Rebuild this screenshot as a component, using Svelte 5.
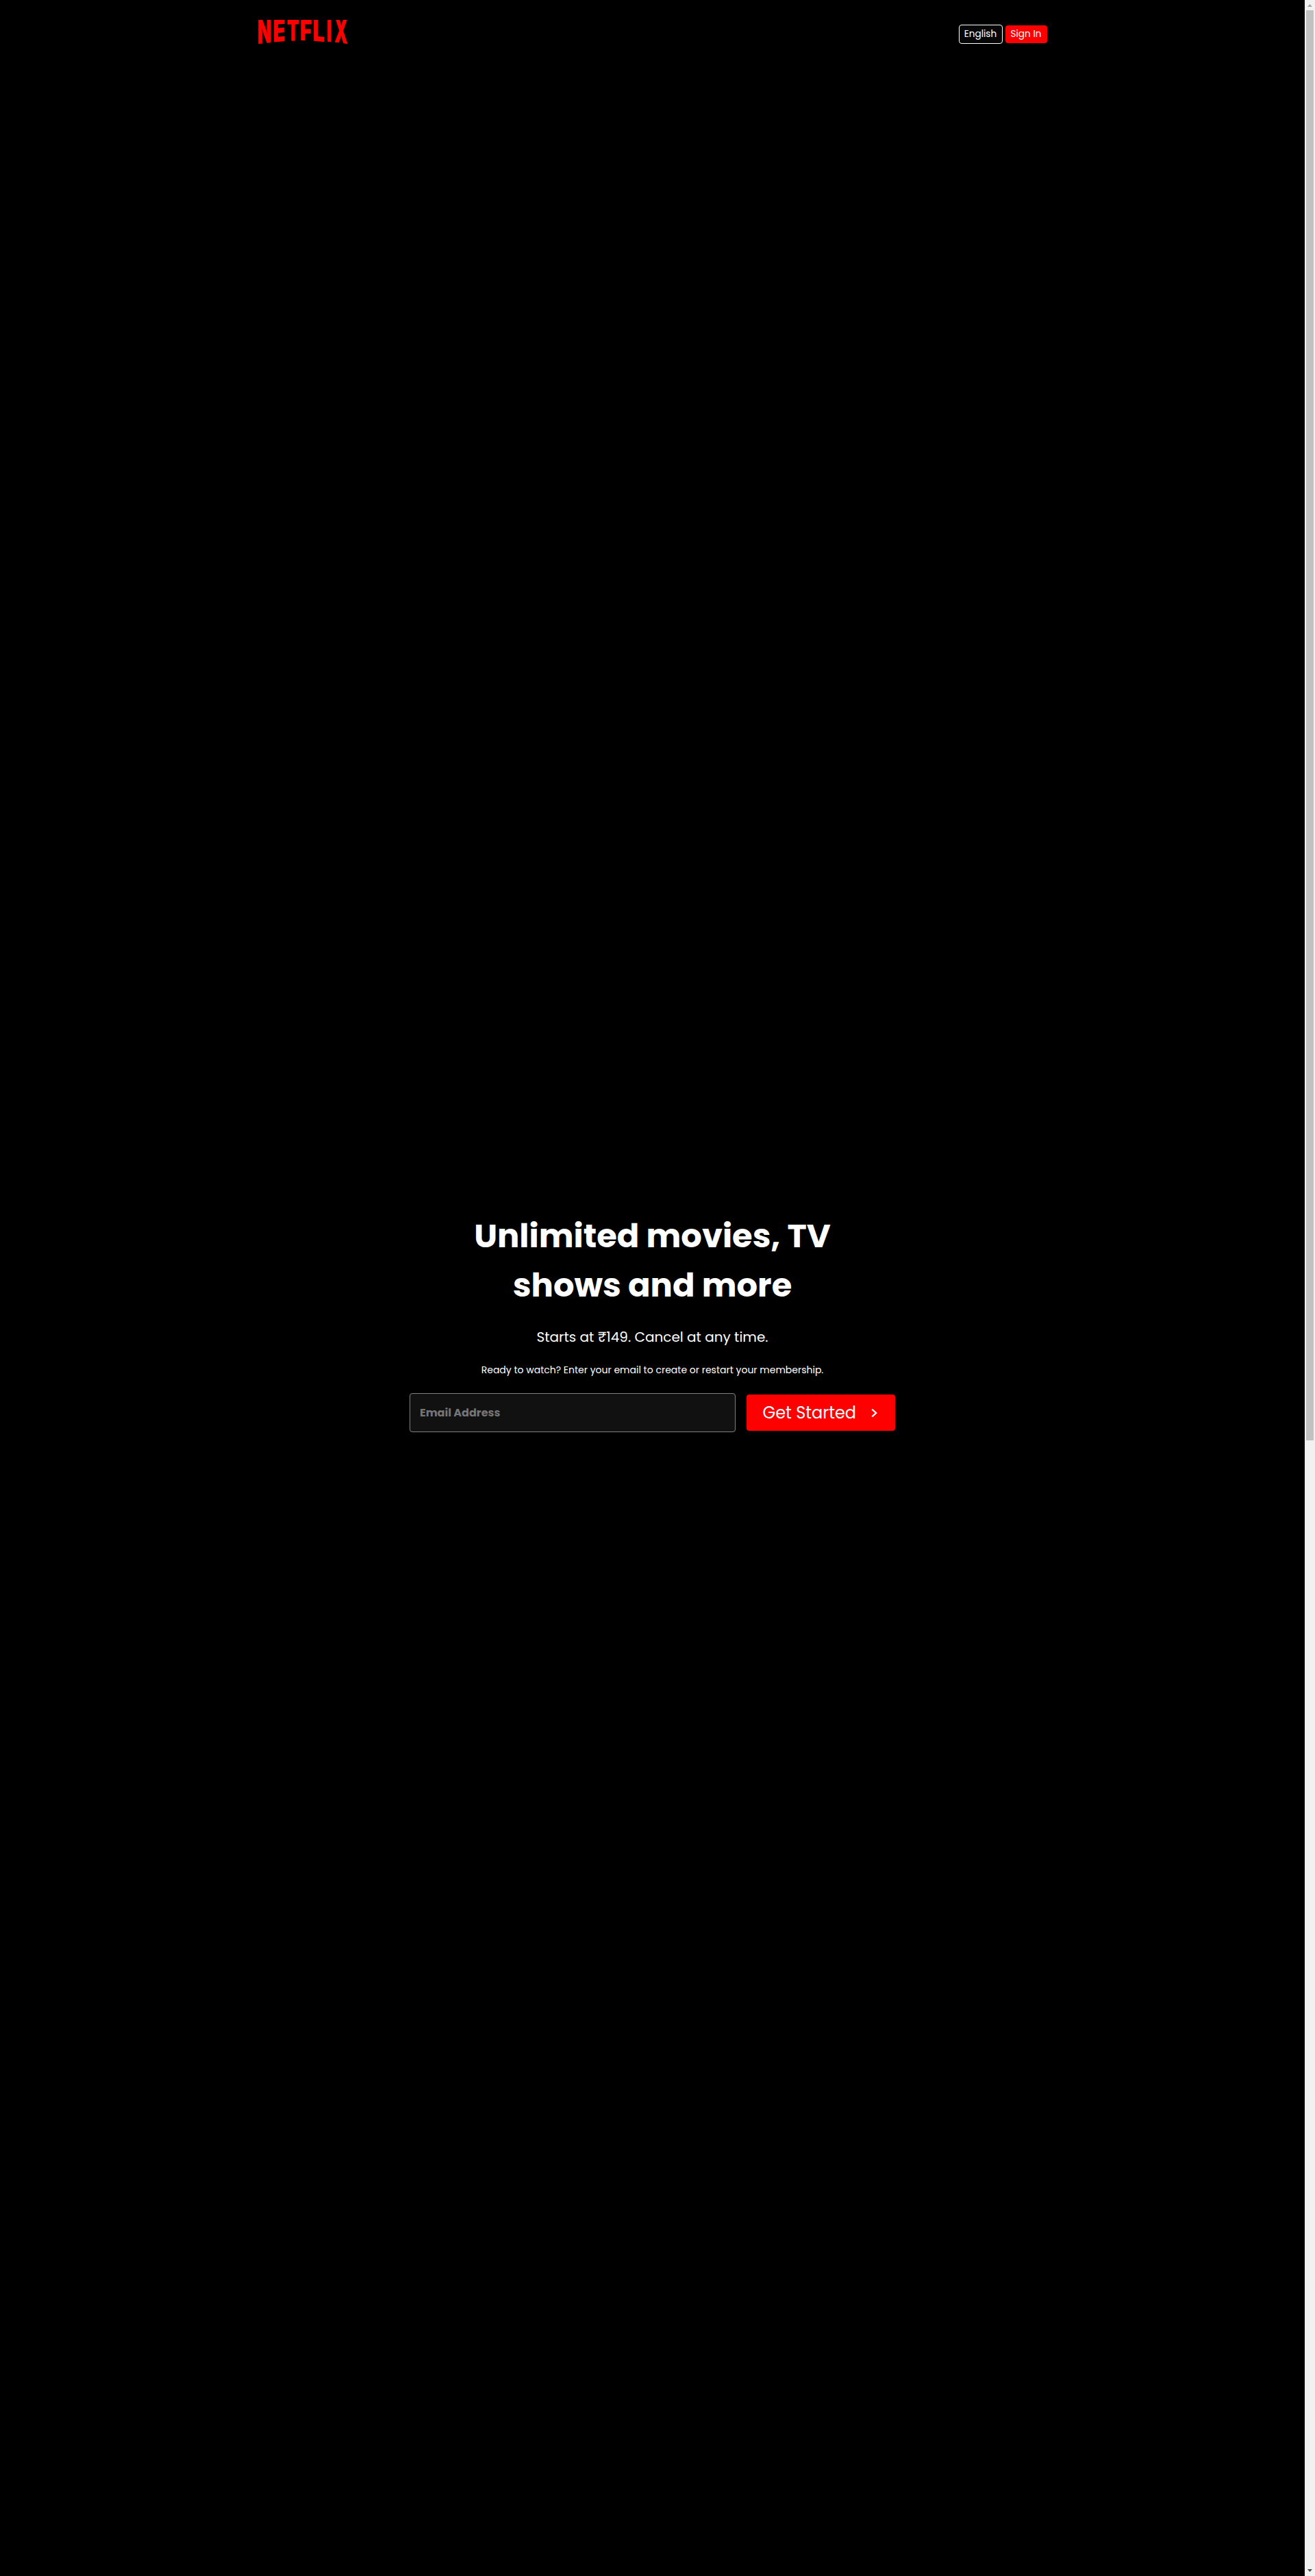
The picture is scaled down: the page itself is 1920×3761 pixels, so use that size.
<script lang="ts">
  type Letter = { char: string; left: number; right: number; y1: number; y2: number; inkL: number; inkR: number };

  // Wordmark letters: horizontal extent, bottom edge at each side, and ink bounds at 100px
  const letters: Letter[] = [
    { char: 'N', left: 51, right: 105, y1: 162, y2: 156, inkL: 5, inkR: 72 },
    { char: 'E', left: 120, right: 166, y1: 154, y2: 150, inkL: 5, inkR: 57.5 },
    { char: 'T', left: 178, right: 228, y1: 149, y2: 147.5, inkL: 2.5, inkR: 66 },
    { char: 'F', left: 238, right: 284, y1: 147, y2: 147, inkL: 5, inkR: 56.5 },
    { char: 'L', left: 294, right: 340, y1: 149, y2: 153, inkL: 5, inkR: 55 },
    { char: 'I', left: 354, right: 370, y1: 152, y2: 154, inkL: 5, inkR: 25 },
    { char: 'X', left: 385, right: 441, y1: 155, y2: 162, inkL: 1.5, inkR: 76 }
  ];

  function place(l: Letter): string {
    const ink = l.inkR - l.inkL;
    const sx = (l.right - l.left) / ink;
    const skew = (l.y2 - l.y1) / ink;
    const sy = (Math.max(l.y1, l.y2) - 57) / 72.7;
    return `matrix(${sx} ${skew} 0 ${sy} ${l.left - sx * l.inkL} ${l.y1 - skew * l.inkL})`;
  }
</script>

<div class="screen">
  <div class="page">
    <header>
      <svg class="logo" viewBox="51 57 390 105" role="img" aria-label="Netflix">
        <clipPath id="flat-top"><rect x="45" y="57" width="402" height="110" /></clipPath>
        <g clip-path="url(#flat-top)">
          {#each letters as l}
            <text transform={place(l)}>{l.char}</text>
          {/each}
        </g>
      </svg>
      <nav>
        <button class="lang">English</button>
        <button class="signin">Sign In</button>
      </nav>
    </header>

    <main>
      <h1>Unlimited movies, TV<br />shows and more</h1>
      <p class="price">Starts at ₹149. Cancel at any time.</p>
      <p class="ready">Ready to watch? Enter your email to create or restart your membership.</p>
      <div class="signup">
        <input type="text" placeholder="Email Address" />
        <button class="start">
          <span>Get Started</span>
          <svg viewBox="0 0 9 14" width="9" height="14"><path d="M1.2 1.6 L7.2 7 L1.2 12.4" /></svg>
        </button>
      </div>
    </main>
  </div>

  <div class="scrollbar">
    <svg class="arrow" viewBox="0 0 15 15"><path d="M4 10 L7.5 6 L11 10 Z" /></svg>
    <div class="thumb"></div>
    <svg class="arrow down" viewBox="0 0 15 15"><path d="M4 5 L7.5 9 L11 5 Z" /></svg>
  </div>
</div>

<style>
  .screen {
    display: flex;
    height: 3761px;
    background: #000;
    color: #fff;
    font-family: Poppins, Inter, sans-serif;
  }
  .page {
    flex: 1;
  }
  header {
    display: flex;
    justify-content: space-between;
    width: 1152px;
    margin: 0 auto;
    padding-top: 29px;
  }
  .logo {
    width: 130px;
    height: 35px;
    overflow: visible;
  }
  .logo text {
    font: 900 100px Inter, sans-serif;
    fill: #f00;
  }
  nav {
    display: flex;
    align-items: center;
    gap: 4px;
    height: 28px;
    margin-top: 7px;
  }
  button,
  input {
    box-sizing: border-box;
    margin: 0;
    padding: 0;
    border: 0;
    border-radius: 4px;
    color: #fff;
    font-family: inherit;
  }
  .lang,
  .signin {
    font-size: 13.6px;
  }
  .lang {
    width: 64px;
    height: 28px;
    border: 1px solid #fff;
    background: #060606;
  }
  .signin {
    width: 61px;
    height: 26px;
    background: #f00;
  }
  main {
    display: flex;
    flex-direction: column;
    align-items: center;
    margin-top: 1705px;
    text-align: center;
  }
  h1 {
    margin: 0;
    font-size: 48px;
    font-weight: 700;
    line-height: 72px;
    white-space: nowrap;
  }
  p {
    margin: 0;
    white-space: nowrap;
  }
  .price {
    margin-top: 24px;
    font-size: 20px;
    line-height: 30px;
  }
  .ready {
    margin-top: 23px;
    font-size: 14px;
    line-height: 21px;
  }
  .signup {
    display: flex;
    align-items: center;
    gap: 16px;
    margin-top: 23px;
  }
  input {
    width: 476px;
    height: 57px;
    padding-left: 14px;
    border: 1px solid #808080;
    background: #111;
    font-size: 16px;
    font-weight: 700;
  }
  input::placeholder {
    color: #757575;
    opacity: 1;
  }
  .start {
    display: flex;
    align-items: center;
    width: 217px;
    height: 53px;
    padding-left: 23.5px;
    background: #f00;
    font-size: 24px;
  }
  .start svg {
    margin-left: 22px;
  }
  .start path {
    fill: none;
    stroke: #fff;
    stroke-width: 2.2;
  }
  .scrollbar {
    display: flex;
    flex-direction: column;
    align-items: center;
    width: 15px;
    background: #f1f1f1;
  }
  .arrow {
    width: 15px;
    height: 15px;
    fill: #a3a3a3;
  }
  .arrow.down {
    margin-top: auto;
    fill: #505050;
  }
  .thumb {
    width: 11px;
    height: 2088px;
    background: #c1c1c1;
  }
</style>
